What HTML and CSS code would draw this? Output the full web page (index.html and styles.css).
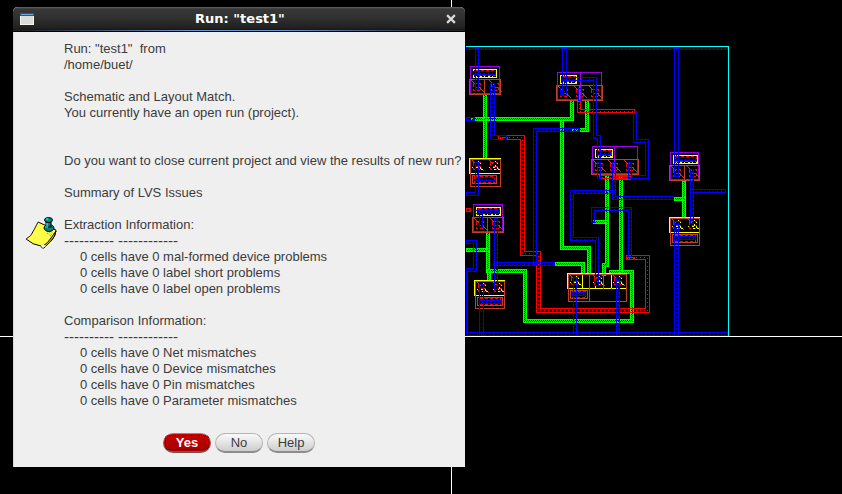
FILE: index.html
```
<!DOCTYPE html>
<html lang="en">
<head>
<meta charset="utf-8">
<title>Run: "test1"</title>
<link rel="stylesheet" href="styles.css">
</head>
<body>
<main class="desktop">
  <svg class="layout" aria-hidden="true">
    <defs>
      <pattern id="dense" width="2" height="2" patternUnits="userSpaceOnUse">
        <path class="green-dot" d="M0 0h1v1h-1zM1 1h1v1h-1z"/>
      </pattern>
    </defs>
    <g id="wires-back"></g>
    <g id="cells" transform="translate(.5 .5)"></g>
    <g id="wires"></g>
    <path class="boundary" d="M466 46h263v290h-1v-289h-262z"/>
    <rect class="cross" x="0" y="336" width="100%" height="1"/>
    <rect class="cross" x="451" y="0" width="1" height="100%"/>
  </svg>

  <section class="dialog" role="dialog" aria-labelledby="title">
    <header class="titlebar">
      <svg class="app-icon" viewBox="0 0 14 12" aria-hidden="true">
        <rect width="14" height="12" fill="#f4f4f0"/>
        <rect x="1" y="3" width="12" height="8" fill="#dcdcd6"/>
        <rect width="14" height="3" fill="#2456a8"/>
        <rect x="1" y="1" width="12" height="1" fill="#6fa0e4"/>
      </svg>
      <h1 class="title" id="title">Run: "test1"</h1>
      <button class="close" type="button" aria-label="Close">
        <svg viewBox="0 0 9 9" aria-hidden="true"><path d="M1 1l7 7M8 1l-7 7"/></svg>
      </button>
    </header>
    <div class="body">
      <svg class="note" viewBox="0 0 33 34" aria-hidden="true">
        <path d="M13 6L31 14Q31 19 27 24L19 32Q17 33 16 30Q8 29 1 23Q6 21 9 14Z" fill="#ffff48" stroke="#000"/>
        <path d="M13 6L9 14Q6 21 1 23" fill="none" stroke="#888" stroke-dasharray="1 1"/>
        <path d="M31 15Q30 21 26 25L19 32L18 30Q23 27 26 22Q29 18 31 15Z" fill="#cc0" stroke="#000"/>
        <path d="M16 30L19 29L21 30L18 32Z" fill="#fff"/>
        <path d="M23 15l4 4M25 15l4 3M22 17l4 3" stroke="#777" stroke-dasharray="1 1"/>
        <ellipse cx="24" cy="12" rx="5" ry="3.500" fill="#008080" stroke="#000"/>
        <rect x="21" y="6" width="5" height="5" fill="#008080" stroke="#000"/>
        <ellipse cx="23.500" cy="4" rx="4" ry="2.500" fill="#008c8c" stroke="#000"/>
        <path d="M21 3h2M22 7v3M20 11h3" stroke="#5ff"/>
      </svg>
      <div class="message">
        <p>Run: "test1"&nbsp; from<br>/home/buet/</p>
        <p>Schematic and Layout Match.<br>You currently have an open run (project).</p>
        <p class="question">Do you want to close current project and view the results of new run?</p>
        <p>Summary of LVS Issues</p>
        <div class="group">
          <h2>Extraction Information:</h2>
          <p class="rule">---------- ------------</p>
          <ul>
            <li>0 cells have 0 mal-formed device problems</li>
            <li>0 cells have 0 label short problems</li>
            <li>0 cells have 0 label open problems</li>
          </ul>
        </div>
        <div class="group">
          <h2>Comparison Information:</h2>
          <p class="rule">---------- ------------</p>
          <ul>
            <li>0 cells have 0 Net mismatches</li>
            <li>0 cells have 0 Device mismatches</li>
            <li>0 cells have 0 Pin mismatches</li>
            <li>0 cells have 0 Parameter mismatches</li>
          </ul>
        </div>
      </div>
    </div>
    <footer class="actions">
      <button class="btn primary" type="button">Yes</button>
      <button class="btn" type="button">No</button>
      <button class="btn" type="button">Help</button>
    </footer>
  </section>
</main>
<script src="layout.js"></script>
</body>
</html>
```

FILE: styles.css
```
* { box-sizing: border-box; }

body {
  margin: 0;
  background: #000;
  color: #3c3c3c;
  font: 13px/16px "Liberation Sans", Arial, sans-serif;
}

.desktop { position: relative; height: 100vh; overflow: hidden; }
.layout { display: block; width: 100%; height: 100%; shape-rendering: crispEdges; }

.boundary { fill: #00ffff; }
.cross { fill: #fff; }
.green-dot { fill: #00ff00; }
.green { stroke: #00ff00; fill: url(#dense); }
.blue { stroke: #0000ff; fill: none; }
.red { stroke: #ff0000; fill: none; }
.dots { stroke-dasharray: 1 3; }
.yellow, .yellow-dash, .brown, .purple, .contact { fill: none; }
.yellow { stroke: #ffff00; }
.yellow-dash { stroke: #ffff00; stroke-dasharray: 1 3 2 2; }
.brown { stroke: #bf4026; }
.purple { stroke: #9900e6; }
.contact { stroke: #ff0000; stroke-dasharray: 3 2; }

.dialog {
  position: absolute;
  left: 13px;
  top: 7px;
  width: 452px;
  background: #efefef;
  border-radius: 5px 5px 0 0;
  box-shadow: inset 1px 0 #d8d8d8;
  overflow: hidden;
}

.titlebar {
  display: flex;
  align-items: center;
  height: 25px;
  padding: 0 9px 0 7px;
  background:
    linear-gradient(90deg, #222 2%, #6a94cc 40%, #6a94cc 60%, #222 98%) 0 23px / 100% 1px no-repeat,
    linear-gradient(#666 0, #383838 2px, #303030 11px, #202020 21px, #111 100%);
  border-bottom: 1px solid #000;
}
.app-icon { width: 14px; height: 12px; }
.title {
  flex: 1;
  margin: 0;
  color: #fff;
  font: bold 13px/22px "DejaVu Sans", sans-serif;
  text-align: center;
}
.close { width: 10px; height: 10px; padding: 0; border: 0; background: none; }
.close svg { display: block; width: 10px; height: 10px; }
.close path { stroke: #d8d8d8; stroke-width: 2; }

.body {
  display: flex;
  align-items: center;
  gap: 6px;
  padding: 9px 0 0 12px;
}
.note { flex: none; width: 33px; height: 34px; margin-top: 16px; }
.message { white-space: nowrap; }
.message p, .message h2, .message ul { margin: 0; padding: 0; font-size: 13px; font-weight: normal; list-style: none; }
.message > p, .group { margin-bottom: 16px; }
.message > .question { margin-top: 32px; }
.message .rule { font-size: 15px; }
.message ul { padding-left: 16px; }
.message .group:last-child { margin-bottom: 0; }

.actions { display: flex; justify-content: center; gap: 4px; padding: 24px 0 14px; }
.btn {
  width: 48px;
  height: 20px;
  padding: 0;
  border: 1px solid #b4b4b4;
  border-bottom: 2px solid #8c8c8c;
  border-radius: 10px;
  background: linear-gradient(#fafafa, #cecece);
  color: #3c3c3c;
  font: 13px/16px "Liberation Sans", Arial, sans-serif;
}
.primary {
  position: relative;
  border-color: #c87070 #a05050 #805050;
  background: linear-gradient(#c80000, #a80000);
  color: #fff;
  font-weight: bold;
}
.primary::after {
  content: "";
  position: absolute;
  inset: 1px;
  border: 1px dotted #300;
  border-radius: 4px;
}
```

FILE: layout.js
```
const NS = 'http://www.w3.org/2000/svg';

function draw(parent, cls, d) {
  const path = document.createElementNS(NS, 'path');
  path.setAttribute('class', cls);
  path.setAttribute('d', d);
  document.getElementById(parent).appendChild(path);
}

// Outline of a square pen of side w swept along right-angled points.
function sweep(points, w) {
  const half = (w - 1) / 2;
  const pts = points.map(([x, y]) => [x + w / 2, y + w / 2]);
  const dirs = [];
  for (let i = 1; i < pts.length; i++) {
    dirs.push([Math.sign(pts[i][0] - pts[i - 1][0]), Math.sign(pts[i][1] - pts[i - 1][1])]);
  }
  const left = [], right = [];
  pts.forEach(([x, y], i) => {
    const a = dirs[i - 1], b = dirs[i];
    if (!a) {
      left.push([x + (-b[1] - b[0]) * half, y + (b[0] - b[1]) * half]);
      right.push([x + (b[1] - b[0]) * half, y + (-b[0] - b[1]) * half]);
    } else if (!b) {
      left.push([x + (a[0] - a[1]) * half, y + (a[1] + a[0]) * half]);
      right.push([x + (a[0] + a[1]) * half, y + (a[1] - a[0]) * half]);
    } else {
      const ox = -a[1] - b[1], oy = a[0] + b[0];
      left.push([x + ox * half, y + oy * half]);
      right.push([x - ox * half, y - oy * half]);
    }
  });
  return 'M' + left.concat(right.reverse()).map(p => p.join(' ')).join('L') + 'Z';
}

// Sparse dotted line that runs inside a wire.
function spine(points, w) {
  const inset = Math.floor(w / 2) + 0.5;
  return 'M' + points.map(([x, y]) => `${x + inset} ${y + inset}`).join('L');
}

const back = [
  ['green', 4, [[483, 94], [483, 156]]],
  ['green', 4, [[471, 117], [570, 117], [570, 100]]],
  ['green', 4, [[560, 120], [560, 246], [587, 246], [587, 271]]],
  ['green', 4, [[585, 100], [585, 128], [572, 128]]],
  ['green', 4, [[605, 175], [605, 263], [602, 263], [602, 272]]],
  ['green', 4, [[619, 175], [619, 270]]],
  ['green', 4, [[674, 197], [682, 197]]],
  ['green', 4, [[682, 181], [682, 215]]],
  ['green', 4, [[593, 220], [605, 220]]],
  ['green', 4, [[466, 248], [486, 248]]],
  ['green', 4, [[486, 232], [486, 269], [523, 269], [523, 319], [630, 319], [630, 270], [609, 270]]],
  ['green', 4, [[487, 269], [487, 278]]],
  ['green', 4, [[555, 262], [581, 262], [581, 271]]]
];

const front = [
  ['red', 5, [[498, 135], [520, 135], [520, 251], [536, 251], [536, 308], [645, 308], [645, 255], [626, 255]]],
  ['red', 3, [[500, 137], [505, 137]]],
  ['red', 4, [[577, 101], [577, 109], [631, 109]]],
  ['red', 4, [[599, 175], [627, 175]]],
  ['red', 4, [[613, 176], [627, 176]]],
  ['red', 4, [[466, 208], [467, 208]]],
  ['red', 3, [[627, 257], [632, 257]]],
  ['blue', 4, [[466, 46], [724, 46]]],
  ['blue', 4, [[466, 332], [724, 332]]],
  ['blue', 4, [[475, 48], [475, 86]]],
  ['blue', 5, [[562, 48], [562, 91]]],
  ['blue', 5, [[674, 48], [674, 172]]],
  ['blue', 5, [[674, 221], [674, 332]]],
  ['blue', 4, [[466, 117], [471, 117]]],
  ['blue', 5, [[490, 83], [490, 135], [502, 135]]],
  ['blue', 4, [[576, 128], [533, 128], [533, 261]]],
  ['blue', 4, [[493, 262], [551, 262]]],
  ['blue', 4, [[494, 218], [494, 286]]],
  ['blue', 4, [[562, 77], [593, 77], [593, 135], [597, 135], [597, 155]]],
  ['blue', 4, [[633, 111], [633, 139], [645, 139], [645, 175], [628, 175]]],
  ['blue', 4, [[628, 162], [628, 175]]],
  ['blue', 4, [[597, 162], [597, 175]]],
  ['blue', 4, [[612, 162], [612, 196], [670, 196]]],
  ['blue', 4, [[690, 169], [690, 220]]],
  ['blue', 4, [[690, 189], [722, 189]]],
  ['blue', 4, [[612, 190], [570, 190], [570, 237], [595, 237], [595, 282]]],
  ['blue', 4, [[591, 219], [591, 207], [628, 207], [628, 253]]],
  ['blue', 4, [[475, 162], [475, 192], [466, 192]]],
  ['blue', 4, [[479, 210], [479, 224]]],
  ['blue', 4, [[466, 240], [473, 240], [473, 268], [466, 268]]],
  ['blue', 5, [[479, 284], [479, 332]]],
  ['blue', 2, [[466, 272], [466, 332]]],
  ['blue', 4, [[573, 277], [573, 332]]],
  ['blue', 4, [[616, 277], [616, 332]]],
  ['blue', 4, [[560, 88], [560, 92]]],
  ['blue', 4, [[578, 88], [578, 97]]],
  ['blue', 4, [[473, 71], [492, 71]]],
  ['blue', 4, [[475, 210], [496, 210]]],
  ['blue', 4, [[597, 151], [607, 151]]],
  ['blue', 4, [[674, 157], [692, 157]]],
  ['blue', 4, [[475, 177], [492, 177]]],
  ['blue', 4, [[674, 236], [692, 236]]],
  ['blue', 4, [[479, 300], [498, 300]]],
  ['blue', 4, [[572, 292], [582, 292]]]
];

const box = (x, y, w, h) => `M${x} ${y}h${w}v${h}h${-w}z`;

function contacts(x, y, offsets) {
  offsets.forEach(o => {
    draw('cells', 'contact', box(x + o, y + 4, 7, 7));
    draw('cells', 'brown', `M${x + o - 2} ${y + 1}l5 5m3 2l5 5`);
    draw('cells', 'contact', `M${x + o + 2} ${y + 8}h5`);
  });
}

// Device row below its well contact.
function upperCell(x, y, w, wellW, offsets) {
  draw('cells', 'purple', box(x + 1, y, w - 2, 27));
  draw('cells', 'yellow', box(x + 4, y + 3, wellW - 1, 8));
  draw('cells', 'contact', box(x + 6, y + 4, wellW - 4, 5));
  draw('cells', 'yellow-dash', `M${x + 6} ${y + 10}h${wellW - 4}`);
  draw('cells', 'brown', box(x, y + 13, w, 15) + `M${x + w / 2 | 0} ${y + 13}v15`);
  contacts(x, y + 13, offsets);
}

// Device row above its substrate contact.
function lowerCell(x, y, w, wellW, offsets) {
  draw('cells', 'yellow', box(x, y, w, 15));
  draw('cells', 'brown', box(x + 1, y + 1, w - 1, 27) + box(x + 3, y + 17, wellW, 8));
  draw('cells', 'contact', box(x + 5, y + 18, wellW - 4, 6));
  contacts(x, y, offsets);
  offsets.forEach(o => draw('cells', 'yellow-dash', `M${x + o + 5} ${y + 2}v12m-7 -5h7m-2 2h8m-4 -7v8`));
}

back.forEach(([cls, w, pts]) => draw('wires-back', cls, sweep(pts, w)));
upperCell(469, 66, 31, 24, [4, 22]);
upperCell(556, 72, 46, 17, [4, 20, 35]);
upperCell(591, 146, 47, 18, [4, 19, 35]);
upperCell(669, 152, 30, 25, [4, 20]);
upperCell(472, 204, 31, 25, [4, 20]);
lowerCell(469, 158, 31, 24, [4, 21]);
lowerCell(669, 217, 30, 25, [4, 20]);
lowerCell(474, 280, 30, 25, [4, 20]);
lowerCell(567, 273, 59, 17, [4, 27, 47]);
draw('cells', 'brown', 'M589 274v26M603 274v14M611 274v14M580 84v15');
draw('cells', 'yellow', 'M582 274v13M595 274v13M611 274v13');
draw('cells', 'purple', 'M580 72v27M614 146v27');
front.forEach(([cls, w, pts]) => {
  draw('wires', cls, sweep(pts, w));
  if (w > 2) draw('wires', `${cls} dots`, spine(pts, w));
});
```
